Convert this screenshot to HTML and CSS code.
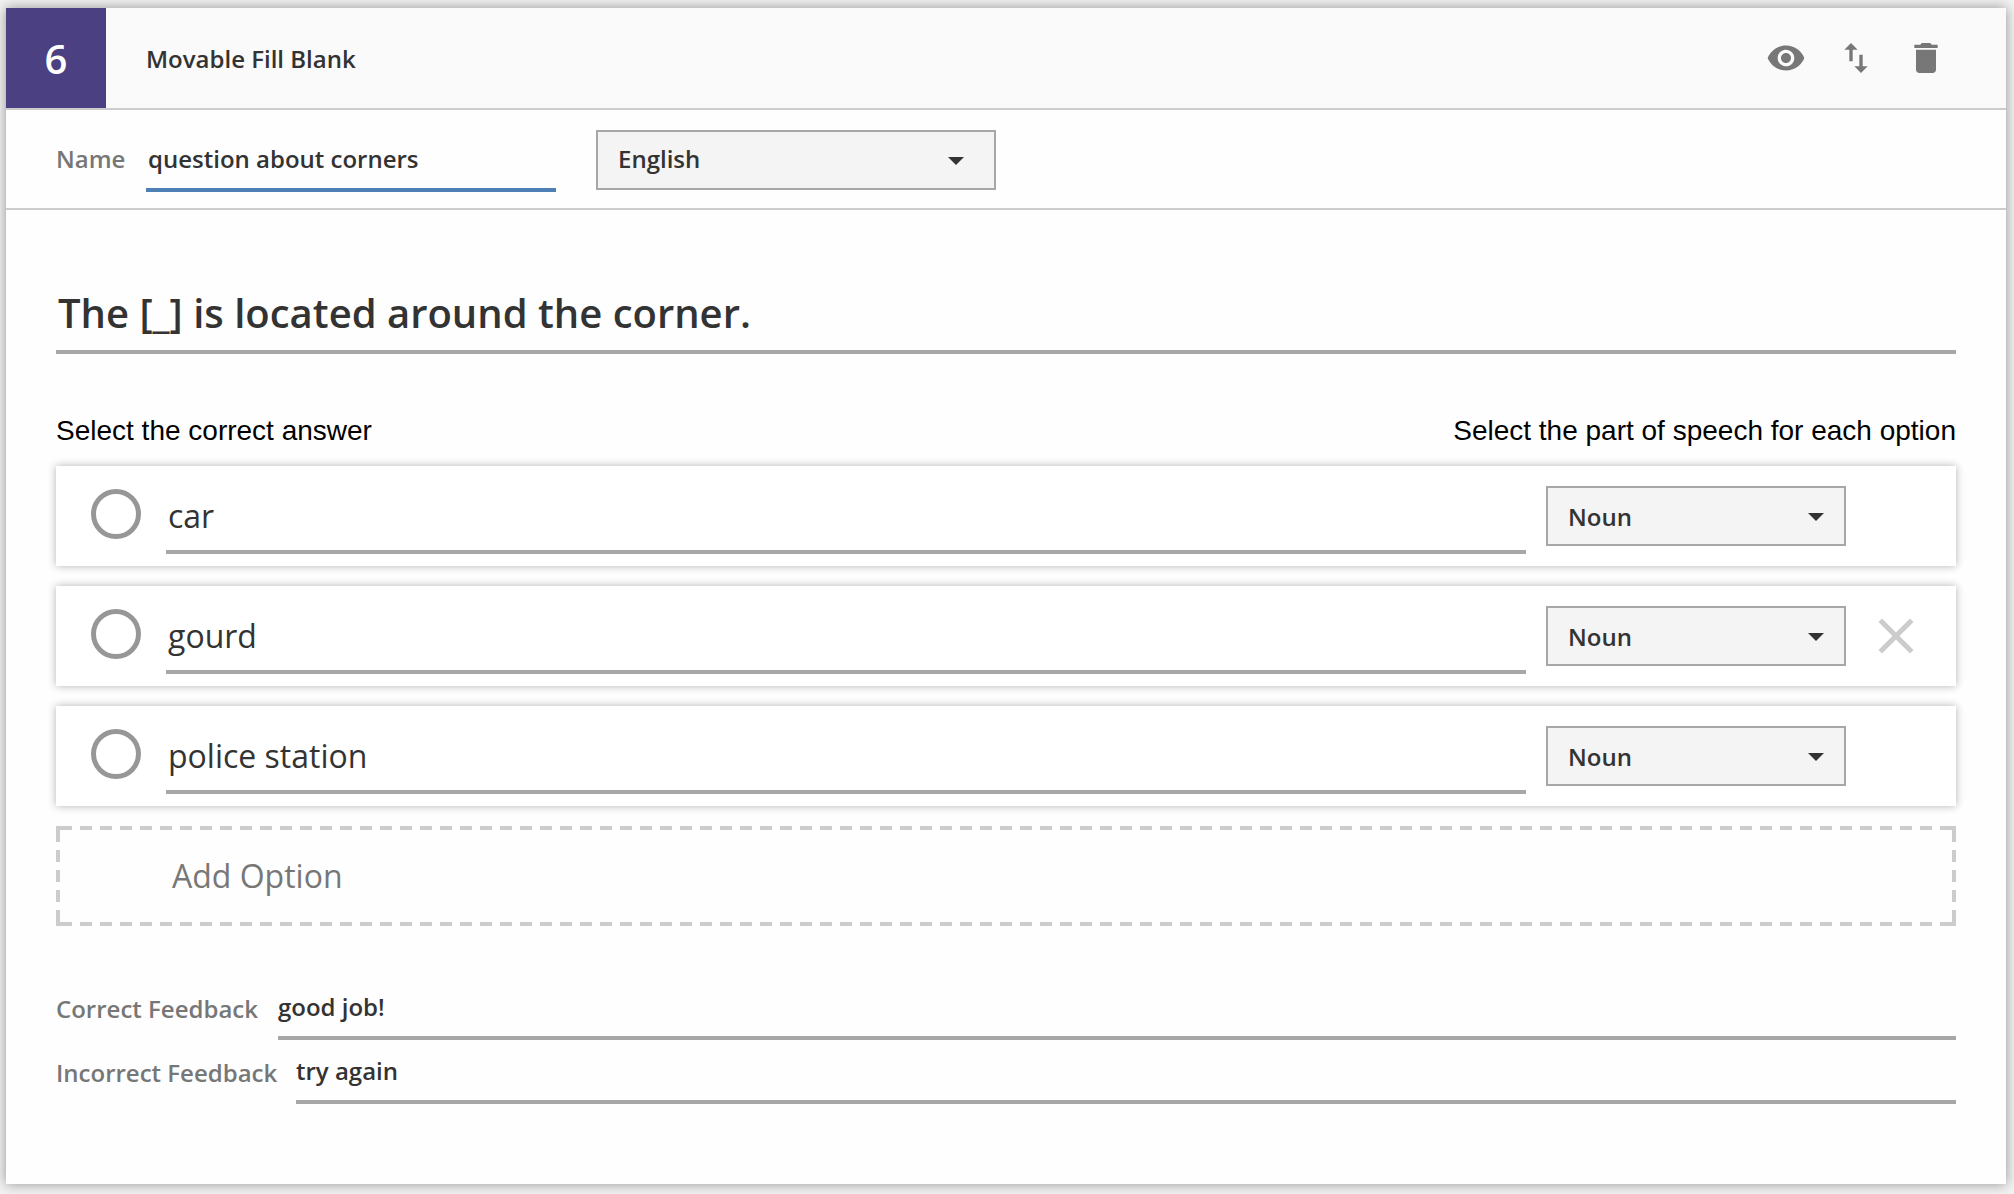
FILE: index.html
```html
<!DOCTYPE html>
<html lang="en">
<head>
<meta charset="utf-8">
<title>Movable Fill Blank</title>
<link rel="stylesheet" href="styles.css">
</head>
<body>
<main class="card">
  <header class="card-header">
    <div class="number">6</div>
    <div class="card-title">Movable Fill Blank</div>
    <div class="actions">
      <svg class="icon" viewBox="0 0 24 24"><path d="M12 4.500C7 4.500 2.730 7.610 1 12c1.730 4.390 6 7.500 11 7.500s9.270-3.110 11-7.500c-1.730-4.390-6-7.500-11-7.500zM12 17c-2.760 0-5-2.240-5-5s2.240-5 5-5 5 2.240 5 5-2.240 5-5 5zm0-8c-1.660 0-3 1.340-3 3s1.340 3 3 3 3-1.340 3-3-1.340-3-3-3z"/></svg>
      <svg class="icon" viewBox="0 0 24 24"><path d="M16 17.010V10h-2v7.010h-3L15 21l4-3.990h-3zM9 3L5 6.990h3V14h2V6.990h3L9 3z"/></svg>
      <svg class="icon" viewBox="0 0 24 24"><path d="M6 19c0 1.100.9 2 2 2h8c1.100 0 2-.9 2-2V7H6v12zM19 4h-3.500l-1-1h-5l-1 1H5v2h14V4z"/></svg>
    </div>
  </header>

  <section class="name-row">
    <span class="name-label">Name</span>
    <div class="field name-field">question about corners</div>
    <div class="select language">
      <span>English</span>
      <svg class="caret" viewBox="0 0 16 8"><path d="M0 0h16L8 8z"/></svg>
    </div>
  </section>

  <section class="content">
    <div class="question">The [_] is located around the corner.</div>

    <div class="hints">
      <span>Select the correct answer</span>
      <span>Select the part of speech for each option</span>
    </div>

    <div class="options">
      <div class="option">
        <span class="radio"></span>
        <div class="option-text">car</div>
        <div class="select speech">
          <span>Noun</span>
          <svg class="caret" viewBox="0 0 16 8"><path d="M0 0h16L8 8z"/></svg>
        </div>
      </div>
      <div class="option">
        <span class="radio"></span>
        <div class="option-text">gourd</div>
        <div class="select speech">
          <span>Noun</span>
          <svg class="caret" viewBox="0 0 16 8"><path d="M0 0h16L8 8z"/></svg>
        </div>
        <svg class="remove" viewBox="0 0 24 24"><path d="M19 6.410L17.590 5 12 10.590 6.410 5 5 6.410 10.590 12 5 17.590 6.410 19 12 13.410 17.590 19 19 17.590 13.410 12z"/></svg>
      </div>
      <div class="option">
        <span class="radio"></span>
        <div class="option-text">police station</div>
        <div class="select speech">
          <span>Noun</span>
          <svg class="caret" viewBox="0 0 16 8"><path d="M0 0h16L8 8z"/></svg>
        </div>
      </div>
      <div class="add-option">
        <svg class="dashes" viewBox="0 0 1900 100">
          <path stroke-dasharray="12 8" d="M4 2H1896M4 98H1896M2 4V96M1898 4V96"/>
          <path d="M0 2h4M1896 2h4M0 98h4M1896 98h4"/>
        </svg>
        <span>Add Option</span>
      </div>
    </div>

    <div class="feedback">
      <div class="feedback-row">
        <span class="feedback-label correct">Correct Feedback</span>
        <div class="field">good job!</div>
      </div>
      <div class="feedback-row">
        <span class="feedback-label incorrect">Incorrect Feedback</span>
        <div class="field">try again</div>
      </div>
    </div>
  </section>
</main>
</body>
</html>
```
FILE: styles.css
```css
* {
  box-sizing: border-box;
}

body {
  margin: 0;
  padding: 8px 8px 10px 6px;
  height: 1194px;
  overflow: hidden;
  background: #f2f2f2;
  color: #333;
  font: 600 24px/33px "Open Sans", sans-serif;
}

.card {
  height: 1176px;
  background: #fefefe;
  box-shadow: 0 0 12px rgba(0, 0, 0, .4);
}

/* Header */
.card-header {
  display: flex;
  height: 102px;
  background: #fafafa;
  border-bottom: 2px solid #ccc;
}

.number {
  width: 100px;
  height: 100px;
  background: #4b4082;
  color: #fff;
  font-size: 40px;
  line-height: 101px;
  text-align: center;
}

.card-title {
  flex: 1;
  padding-left: 40px;
  line-height: 101px;
}

.actions {
  display: flex;
  align-items: center;
  gap: 30px;
  padding-right: 60px;
}

.icon {
  width: 40px;
  height: 40px;
  fill: #777;
}

/* Name and language */
.name-row {
  display: flex;
  align-items: flex-start;
  height: 100px;
  padding-left: 50px;
  border-bottom: 2px solid #ccc;
}

.name-label {
  width: 90px;
  margin-top: 32px;
  color: #777;
}

.field {
  height: 50px;
  border-bottom: 4px solid #a7a7a7;
}

.name-field {
  width: 410px;
  margin: 32px 40px 0 0;
  padding-left: 2px;
  border-color: #4e7fb5;
}

.select {
  display: flex;
  align-items: flex-start;
  justify-content: space-between;
  height: 60px;
  margin-top: 20px;
  padding-left: 20px;
  background: #f4f4f4;
  border: 2px solid #a7a7a7;
}

.caret {
  width: 16px;
  height: 8px;
  margin-top: 24.500px;
  fill: #333;
}

.language {
  width: 400px;
  padding-right: 30px;
  line-height: 53px;
}

.speech {
  width: 300px;
  margin-left: 20px;
  padding-right: 20px;
  line-height: 57px;
}

/* Question */
.content {
  padding: 67px 50px 0;
}

.question {
  padding: 0 0 2px 2px;
  border-bottom: 4px solid #a7a7a7;
  font-size: 40px;
  line-height: 71px;
}

.hints {
  display: flex;
  justify-content: space-between;
  margin: 61px 0 20px;
  color: #000;
  font: 28px/31px "Liberation Sans", Arial, sans-serif;
}

/* Answer options */
.options {
  display: flex;
  flex-direction: column;
  gap: 20px;
}

.option {
  display: flex;
  align-items: flex-start;
  height: 100px;
  padding-left: 35px;
  background: #fff;
  box-shadow: 0 0 8px rgba(0, 0, 0, .3);
}

.radio {
  width: 50px;
  height: 50px;
  margin: 23px 25px 0 0;
  border: 5px solid #979797;
  border-radius: 50%;
}

.option-text {
  width: 1360px;
  height: 60px;
  margin-top: 28px;
  padding-left: 2px;
  border-bottom: 4px solid #a7a7a7;
  font-size: 32px;
  font-weight: 400;
  line-height: 43px;
}

.remove {
  width: 60px;
  height: 60px;
  margin: 20px 0 0 20px;
  fill: #ccc;
}

.add-option {
  position: relative;
  height: 100px;
  padding: 28px 0 0 116px;
  color: #777;
  font-size: 32px;
  font-weight: 400;
  line-height: 43px;
}

.dashes {
  position: absolute;
  inset: 0;
  width: 1900px;
  height: 100px;
  fill: none;
  stroke: #ccc;
  stroke-width: 4px;
}

/* Feedback */
.feedback {
  display: flex;
  flex-direction: column;
  gap: 14px;
  margin-top: 64px;
}

.feedback-row {
  display: flex;
}

.feedback-row .field {
  flex: 1;
}

.feedback-label {
  padding-top: 2px;
  color: #777;
}

.correct {
  width: 222px;
}

.incorrect {
  width: 240px;
}
```
